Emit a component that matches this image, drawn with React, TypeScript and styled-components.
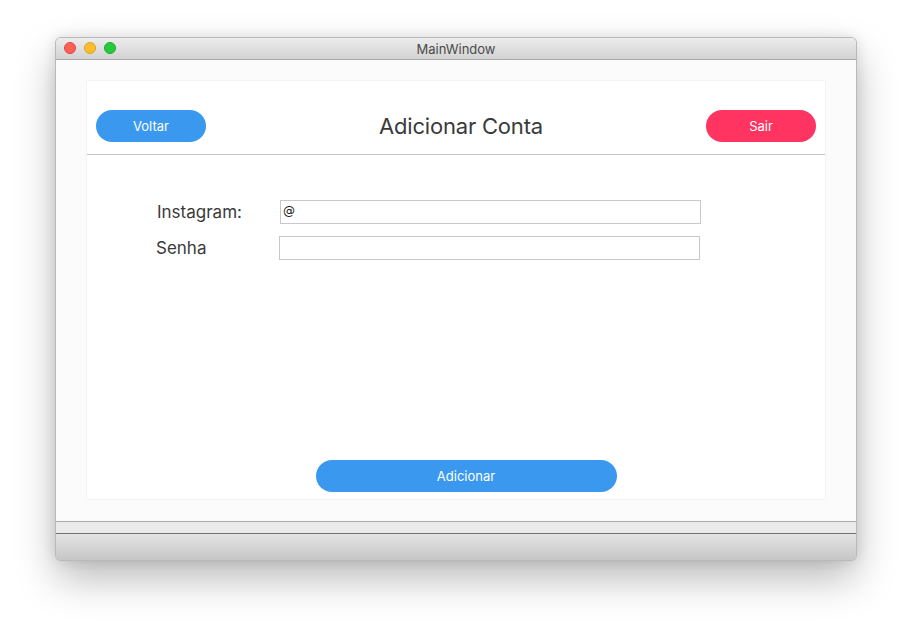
import React from "react";
import styled, { createGlobalStyle } from "styled-components";

const Global = createGlobalStyle`
  html, body { margin: 0; padding: 0; background: #ffffff; }
  body { font-family: Inter, "Liberation Sans", sans-serif; }
  * { box-sizing: border-box; }
`;

const Stage = styled.div`
  width: 912px;
  height: 634px;
  padding: 38px 0 0 56px;
  background: #ffffff;
`;

const Window = styled.div`
  width: 800px;
  height: 522px;
  display: flex;
  flex-direction: column;
  border-radius: 5px;
  overflow: hidden;
  box-shadow: 0 0 0 1px #b9b9b9, 0 18px 40px rgba(0, 0, 0, 0.28), 0 0 14px rgba(0, 0, 0, 0.12);
`;

const TitleBar = styled.div`
  position: relative;
  height: 22px;
  flex: 0 0 22px;
  background: linear-gradient(#ececec, #d3d3d3);
  border-bottom: 1px solid #a8a8a8;
  display: flex;
  align-items: center;
  justify-content: center;
  font-size: 13px;
  color: #4b4b4b;
`;

const Lights = styled.div`
  position: absolute;
  left: 8px;
  top: 4px;
  display: flex;
  gap: 8px;
`;

const Light = styled.span<{ $c: string; $b: string }>`
  width: 12px;
  height: 12px;
  border-radius: 50%;
  background: ${(p) => p.$c};
  border: 1px solid ${(p) => p.$b};
`;

const Content = styled.div`
  flex: 0 0 461px;
  background: #fbfbfb;
  padding: 20px 30px 21px 30px;
`;

const Panel = styled.div`
  height: 420px;
  background: #ffffff;
  border: 1px solid #f3f3f3;
  display: flex;
  flex-direction: column;
`;

const Header = styled.div`
  display: flex;
  align-items: center;
  justify-content: space-between;
  padding: 29px 9px 12px 9px;
  border-bottom: 1px solid #c4c4c4;
`;

const PillButton = styled.button<{ $color: string; $w: number }>`
  width: ${(p) => p.$w}px;
  height: 32px;
  border: none;
  border-radius: 16px;
  background: ${(p) => p.$color};
  color: #ffffff;
  font-family: Inter, "Liberation Sans", sans-serif;
  font-size: 13px;
  padding: 0;
`;

const Title = styled.h1`
  margin: 0 0 0 10px;
  font-size: 22px;
  font-weight: 400;
  color: #3a3a3a;
  letter-spacing: -0.2px;
`;

const Form = styled.div`
  display: grid;
  grid-template-columns: 123px 421px;
  row-gap: 12px;
  padding: 45px 0 0 70px;
  align-items: center;
`;

const Label = styled.label<{ $dx: number }>`
  font-size: 17px;
  color: #3a3a3a;
  margin-left: ${(p) => p.$dx}px;
`;

const Input = styled.div<{ $dx: number }>`
  width: 421px;
  height: 24px;
  border: 1px solid #c8c8c8;
  margin-left: ${(p) => p.$dx}px;
  font-family: "DejaVu Sans", sans-serif;
  font-size: 12px;
  color: #111;
  padding: 3px 0 0 2px;
`;

const Footer = styled.div`
  margin-top: auto;
  display: flex;
  justify-content: center;
  padding: 0 0 7px 20px;
`;

const Strip = styled.div`
  flex: 0 0 12px;
  background: #ebebeb;
  border-top: 1px solid #a9a9a9;
`;

const BottomBar = styled.div`
  flex: 1;
  border-top: 1px solid #6f6f6f;
  background: linear-gradient(#e4e4e4, #c6c6c6);
`;

export default function App() {
  return (
    <Stage>
      <Global />
      <Window>
        <TitleBar>
          <Lights>
            <Light $c="#fe5f57" $b="#e0443e" />
            <Light $c="#febc2e" $b="#dea123" />
            <Light $c="#28c840" $b="#1aab29" />
          </Lights>
          MainWindow
        </TitleBar>
        <Content>
          <Panel>
            <Header>
              <PillButton $color="#3a99ef" $w={110}>Voltar</PillButton>
              <Title>Adicionar Conta</Title>
              <PillButton $color="#ff3460" $w={110}>Sair</PillButton>
            </Header>
            <Form>
              <Label $dx={0}>Instagram:</Label>
              <Input $dx={0}>@</Input>
              <Label $dx={-1}>Senha</Label>
              <Input $dx={-1} />
            </Form>
            <Footer>
              <PillButton $color="#3a99ef" $w={301}>Adicionar</PillButton>
            </Footer>
          </Panel>
        </Content>
        <Strip />
        <BottomBar />
      </Window>
    </Stage>
  );
}
